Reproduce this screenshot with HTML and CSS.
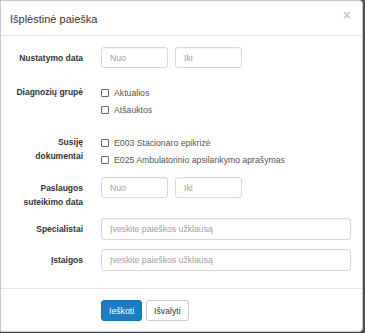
FILE: index.html
```html
<!DOCTYPE html>
<html lang="lt">
<head>
  <meta charset="UTF-8">
  <meta name="viewport" content="width=device-width, initial-scale=1.0">
  <title>Išplėstinė paieška</title>
  <link rel="stylesheet" href="styles.css">
</head>
<body>
  <!-- modalinis langas -->
  <div class="modal">
    <div class="modal-header">
      <h4>Išplėstinė paieška</h4>
      <span class="close">&times;</span>
    </div>

    <div class="modal-body">
      <div class="form-group">
        <label class="label">Nustatymo data</label>
        <div class="fields">
          <input class="input input-short" type="text" placeholder="Nuo">
          <input class="input input-short" type="text" placeholder="Iki">
        </div>
      </div>

      <div class="form-group checks">
        <label class="label">Diagnozių grupė</label>
        <div class="fields fields-col">
          <label class="check"><span class="box"></span>Aktualios</label>
          <label class="check"><span class="box"></span>Atšauktos</label>
        </div>
      </div>

      <div class="form-group checks">
        <label class="label">Susiję<br>dokumentai</label>
        <div class="fields fields-col">
          <label class="check"><span class="box"></span>E003 Stacionaro epikrizė</label>
          <label class="check"><span class="box"></span>E025 Ambulatorinio apsilankymo aprašymas</label>
        </div>
      </div>

      <div class="form-group">
        <label class="label">Paslaugos<br>suteikimo data</label>
        <div class="fields">
          <input class="input input-short" type="text" placeholder="Nuo">
          <input class="input input-short" type="text" placeholder="Iki">
        </div>
      </div>

      <div class="form-group">
        <label class="label">Specialistai</label>
        <div class="fields">
          <input class="input input-long" type="text" placeholder="Įveskite paieškos užklausą">
        </div>
      </div>

      <div class="form-group">
        <label class="label">Įstaigos</label>
        <div class="fields">
          <input class="input input-long" type="text" placeholder="Įveskite paieškos užklausą">
        </div>
      </div>
    </div>

    <div class="modal-footer">
      <button class="btn btn-primary">Ieškoti</button>
      <button class="btn btn-default">Išvalyti</button>
    </div>
  </div>
</body>
</html>
```

FILE: styles.css
```css
/* bendri */
* {
  margin: 0;
  padding: 0;
  box-sizing: border-box;
}
body {
  font-family: 'Liberation Sans', Arial, sans-serif;
  font-size: 8.7px;
  color: #333;
  background: #5b5b5b;
  height: 333px;
  overflow: hidden;
}

/* modalas */
.modal {
  width: 363px;
  background: #fff;
  border: 1px solid #c8c8c8;
  border-radius: 0 4px 4px 0;
  box-shadow: 0 3px 8px rgba(0,0,0,0.4);
}
.modal-header {
  height: 35px;
  display: flex;
  align-items: center;
  justify-content: space-between;
  padding: 0 11px 0 9px;
  border-bottom: 1px solid #e5e5e5;
}
.modal-header h4 {
  font-size: 11px;
  font-weight: normal;
  color: #333;
  margin-top: 1px;
}
.close {
  font-size: 14px;
  font-weight: bold;
  color: #c9c9c9;
  margin-top: -6px;
}

.modal-body {
  padding: 11px 0 17px;
}

/* formos eilutės */
.form-group {
  display: grid;
  grid-template-columns: 82px 1fr;
  column-gap: 18px;
  margin-bottom: 9px;
}
.form-group:last-child {
  margin-bottom: 0;
}
.label {
  text-align: right;
  font-size: 8.5px;
  font-weight: bold;
  line-height: 14px;
  padding-top: 4px;
}
.checks .label {
  padding-top: 8px;
}
.fields {
  display: flex;
  gap: 7px;
}
.fields-col {
  flex-direction: column;
  gap: 0;
  padding-top: 7px;
}

.input {
  height: 21px;
  border: 1px solid #d9d9d9;
  border-radius: 3px;
  padding: 0 8px;
  font-family: inherit;
  font-size: 8.7px;
  color: #333;
  box-shadow: inset 0 1px 1px rgba(0,0,0,0.05);
}
.input::placeholder {
  color: #a0a0a0;
}
.input-short {
  width: 67px;
}
.input-long {
  width: 250px;
  height: 22px;
}

/* varnelės */
.check {
  display: flex;
  align-items: center;
  height: 17px;
  color: #555;
}
.box {
  width: 8px;
  height: 8px;
  border: 1px solid #666;
  border-radius: 1px;
  margin-right: 5px;
}

/* apačia */
.modal-footer {
  border-top: 1px solid #e5e5e5;
  padding: 11px 0 10px 100px;
  display: flex;
  gap: 4px;
}
.btn {
  height: 21px;
  padding: 0 7px;
  border-radius: 3px;
  font-family: inherit;
  font-size: 8.7px;
  cursor: pointer;
}
.btn-primary {
  background: #1b7cc0;
  border: 1px solid #186fad;
  color: #fff;
}
.btn-default {
  background: #fff;
  border: 1px solid #ccc;
  color: #333;
}
```
